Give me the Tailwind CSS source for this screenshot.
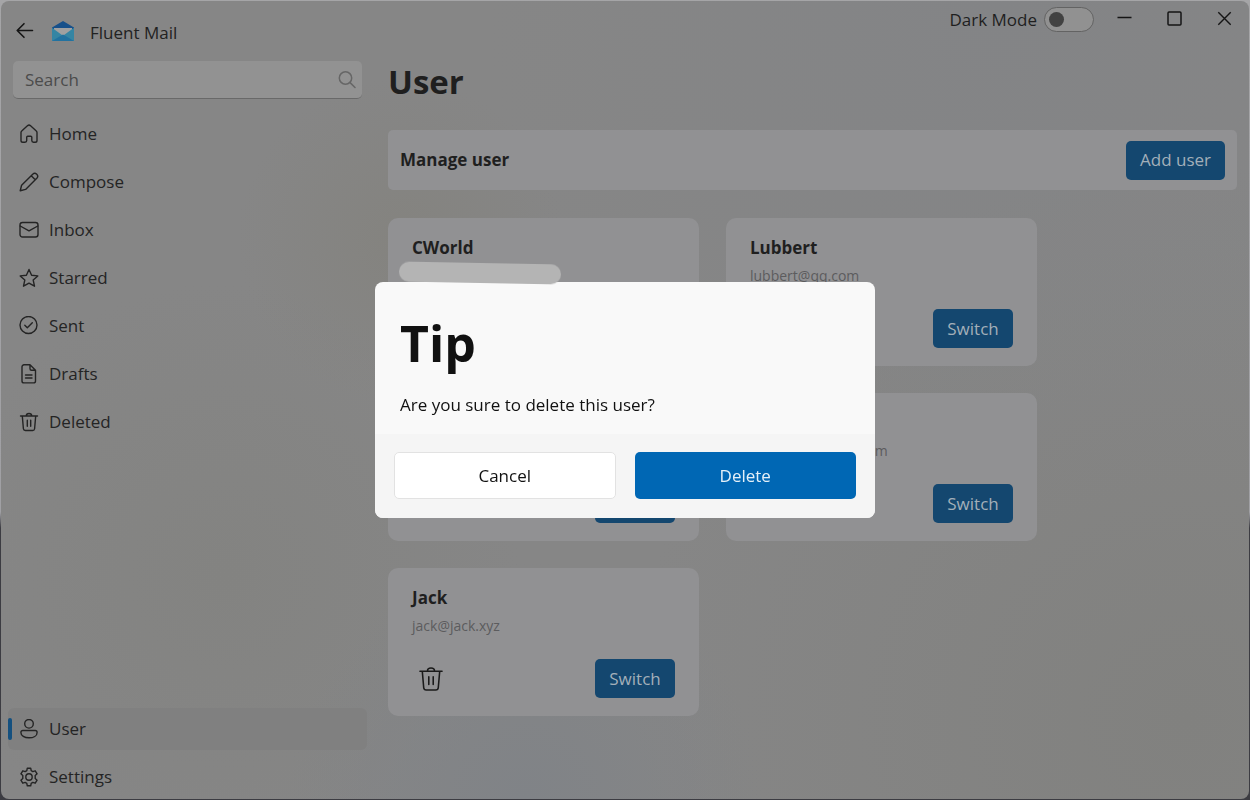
<!DOCTYPE html>
<html lang="en">
<head>
<meta charset="utf-8">
<meta name="viewport" content="width=device-width, initial-scale=1">
<title>Fluent Mail</title>
<script src="https://cdn.jsdelivr.net/npm/@tailwindcss/browser@4"></script>
</head>
<body class="min-h-screen bg-[linear-gradient(to_bottom,#a5a5a7_0%,#a0a0a4_64%,#3c3c42_66%,#3c3c42_100%)] p-px font-['Open_Sans',sans-serif] text-[17px] leading-6 text-[#1f1f1f]">

<svg class="hidden" aria-hidden="true">
  <symbol id="trash" viewBox="0 0 20 20"><path d="M1.5 4h17M3.3 4l1.1 12.7a2 2 0 0 0 2 1.8h7.2a2 2 0 0 0 2-1.8L16.700 4M7.300 3.800a2.700 2.300 0 0 1 5.400 0M8.300 8.200v6M11.700 8.200v6"/></symbol>
</svg>

<div class="flex min-h-[calc(100vh-2px)] overflow-hidden rounded-lg bg-[#868686] bg-[radial-gradient(circle_at_42%_100%,#808387_0%,transparent_22%),radial-gradient(circle_at_32%_30%,#84837f_0%,transparent_16%),radial-gradient(circle_at_80%_0%,#838486_0%,transparent_40%),radial-gradient(circle_at_95%_90%,#81817f_0%,transparent_40%),radial-gradient(circle_at_18%_72%,#838381_0%,transparent_25%)]">

  <aside class="flex w-[374px] shrink-0 flex-col pl-[7px] pr-2">
    <header class="flex h-[60px] items-center pl-2 text-[#222]">
      <button type="button" aria-label="Back" class="mr-[18px]">
        <svg class="size-[18px]" viewBox="0 0 18 18" fill="none" stroke="#151515" stroke-width="1.600" stroke-linecap="round" stroke-linejoin="round"><path d="M16.500 8.500H1.200M8 1.700 1.200 8.500 8 15.300"/></svg>
      </button>
      <svg class="mr-4 size-[22px]" viewBox="0 0 22 22" aria-hidden="true">
        <path d="M0 7.500 11 1 22 7.500v8H0z" fill="#17508a"/>
        <path d="M2 8h18v8H2z" fill="#a0a0a0"/>
        <path d="M0 7.800v13.200h22V7.800l-11 8z" fill="#3585a3"/>
        <path d="M0 21 11 14.500l11 6.500z" fill="#2272a0"/>
      </svg>
      <span class="pt-1">Fluent Mail</span>
    </header>

    <div class="ml-[5px] mr-[5px] flex h-[38px] items-center rounded-[5px] border-b border-[#696969] bg-[#929292] pl-3 pr-1.5">
      <input type="search" aria-label="Search" placeholder="Search" class="min-w-0 flex-1 bg-transparent outline-none placeholder:text-[#4b4b4b]">
      <svg class="size-[18px]" viewBox="0 0 18 18" fill="none" stroke="#666" stroke-width="1.500" stroke-linecap="round" aria-hidden="true"><circle cx="7.500" cy="7" r="6.200"/><path d="m12.100 11.600 4.900 4.900"/></svg>
    </div>

    <nav class="flex flex-1 flex-col gap-1.5 pt-[14px] text-[#242424] [&_a]:flex [&_a]:h-[42px] [&_a]:items-center [&_a]:gap-[10px] [&_a]:rounded-md [&_a]:pl-[11px] [&_svg]:size-5 [&_svg]:fill-none [&_svg]:stroke-[#242424] [&_svg]:[stroke-width:1.4] [&_svg]:[stroke-linejoin:round] [&_svg]:[stroke-linecap:round]">
      <a href="#home"><svg viewBox="0 0 20 20"><path d="M2 8.500a2 2 0 0 1 .7-1.500L8.700 1.600a2 2 0 0 1 2.600 0l6 5.400a2 2 0 0 1 .7 1.500v8a1.800 1.800 0 0 1-1.800 1.800h-1.700a1.700 1.700 0 0 1-1.700-1.700v-3.300a1 1 0 0 0-1-1H8.700a1 1 0 0 0-1 1v3.300A1.700 1.700 0 0 1 6 18.300H3.800A1.800 1.800 0 0 1 2 16.500z"/></svg>Home</a>
      <a href="#compose"><svg viewBox="0 0 20 20"><path d="M1.200 18.700 2.600 13.300 13.700 2.200a2.900 2.900 0 0 1 4.100 4.100L6.600 17.400zM12.200 3.700l4.100 4.100"/></svg>Compose</a>
      <a href="#inbox"><svg viewBox="0 0 20 20"><rect x="1" y="2.500" width="18" height="14.500" rx="2.500"/><path d="m1.200 6 8.800 4.900 8.800-4.900"/></svg>Inbox</a>
      <a href="#starred"><svg viewBox="0 0 20 20"><path d="m10 1.500 2.600 5.700 6.200.7-4.600 4.200 1.300 6.100L10 15.100l-5.500 3.100 1.300-6.100L1.200 7.900l6.200-.7z"/></svg>Starred</a>
      <a href="#sent"><svg viewBox="0 0 20 20"><circle cx="9.500" cy="9" r="8.500"/><path d="m5.800 9.300 2.500 2.500 5-5"/></svg>Sent</a>
      <a href="#drafts"><svg viewBox="0 0 20 20"><path d="M11 .8H5a2 2 0 0 0-2 2v14.100a2 2 0 0 0 2 2h9.500a2 2 0 0 0 2-2V6.300zM11 .8v4a1.500 1.500 0 0 0 1.500 1.500h4M6.500 11H13M6.500 14H13"/></svg>Drafts</a>
      <a href="#deleted"><svg viewBox="0 0 20 20"><use href="#trash"/></svg>Deleted</a>
      <a href="#user" aria-current="page" class="relative mt-auto bg-[#808080] before:absolute before:left-0 before:h-[22px] before:w-1 before:rounded-full before:bg-[#14507f]"><svg viewBox="0 0 20 20"><circle cx="10" cy="4.800" r="4.300"/><path d="M3.800 11.500h12.400a1.900 1.900 0 0 1 1.900 1.900c0 3.400-3.600 5.400-8.100 5.400s-8.100-2-8.100-5.400a1.900 1.900 0 0 1 1.900-1.900z"/></svg>User</a>
      <a href="#settings" class="mb-px"><svg viewBox="0 0 20 20"><circle cx="10" cy="10" r="3.200"/><path d="M8.300 1.200h3.400l.5 2.500 1.600.9 2.400-.8 1.900 3-1.900 1.700v3l1.900 1.700-1.900 3-2.400-.8-1.600.9-.5 2.500H8.300l-.5-2.500-1.600-.9-2.400.8-1.900-3 1.900-1.700v-3L1.900 6.800l1.900-3 2.400.8 1.600-.9z"/></svg>Settings</a>
    </nav>
  </aside>

  <main class="min-w-0 flex-1 pl-[13px] pr-3">
    <div class="flex h-9 items-center justify-end">
      <label for="dark" class="mr-[7px] pt-0.5">Dark Mode</label>
      <input id="dark" type="checkbox" role="switch" class="mr-[23px] flex h-[25px] w-[50px] appearance-none items-center rounded-full border border-[#636363] bg-[#919191] px-1 before:size-[15px] before:rounded-full before:bg-[#424242] checked:justify-end">
      <div class="flex gap-[35px] pb-0.5 pr-[5px]">
        <button type="button" aria-label="Minimize"><svg class="size-[15px]" viewBox="0 0 15 15" fill="none" stroke="#151515" stroke-width="1.300"><path d="M.5 6.500h14"/></svg></button>
        <button type="button" aria-label="Maximize"><svg class="size-[15px]" viewBox="0 0 15 15" fill="none" stroke="#151515" stroke-width="1.500"><rect x="1" y="1" width="13" height="13" rx="1"/></svg></button>
        <button type="button" aria-label="Close"><svg class="size-[15px]" viewBox="0 0 15 15" fill="none" stroke="#151515" stroke-width="1.400"><path d="m1.300 1.300 12.400 12.400M13.700 1.300 1.300 13.700"/></svg></button>
      </div>
    </div>

    <h1 class="mt-[22px] text-[33px] font-bold leading-[45px]">User</h1>

    <section class="mt-[26px] flex h-[60px] items-center justify-between rounded-[5px] bg-[#919193] px-3">
      <h2 class="font-bold">Manage user</h2>
      <button type="button" class="h-[39px] rounded-[5px] bg-[#14476f] px-[14px] text-[#a3afb9]">Add user</button>
    </section>

    <section aria-label="Users" class="mt-7 grid grid-cols-[repeat(auto-fill,311px)] gap-[27px]">
      <article class="relative flex h-[148px] flex-col rounded-[10px] bg-[#919193] px-6 pb-[18px] pt-[18px]">
        <h3 class="font-bold">CWorld</h3>
        <span class="absolute left-[11px] top-[45px] z-10 h-5 w-[162px] rotate-1 rounded-full bg-[#b4b4b4]"></span>
        <div class="mt-auto flex items-center justify-between">
          <button type="button" aria-label="Delete CWorld" class="ml-1.5"><svg class="size-[26px] fill-none stroke-[#1a1a1a]" viewBox="0 0 20 20"><use href="#trash"/></svg></button>
          <button type="button" class="h-[39px] w-20 rounded-[5px] bg-[#14476f] text-[#a3afb9]">Switch</button>
        </div>
      </article>
      <article class="flex h-[148px] flex-col rounded-[10px] bg-[#919193] px-6 pb-[18px] pt-[18px]">
        <h3 class="font-bold">Lubbert</h3>
        <p class="mt-1 text-[14px] leading-6 text-[#5c5c5e]">lubbert@qq.com</p>
        <div class="mt-auto flex items-center justify-between">
          <button type="button" aria-label="Delete Lubbert" class="ml-1.5"><svg class="size-[26px] fill-none stroke-[#1a1a1a]" viewBox="0 0 20 20"><use href="#trash"/></svg></button>
          <button type="button" class="h-[39px] w-20 rounded-[5px] bg-[#14476f] text-[#a3afb9]">Switch</button>
        </div>
      </article>
      <article class="flex h-[148px] flex-col justify-end rounded-[10px] bg-[#919193] px-6 pb-[18px] pt-[18px]">
        <div class="flex items-center justify-end">
          <button type="button" class="h-[39px] w-20 rounded-[5px] bg-[#14476f] text-[#a3afb9]">Switch</button>
        </div>
      </article>
      <article class="flex h-[148px] flex-col rounded-[10px] bg-[#919193] px-6 pb-[18px] pt-[18px]">
        <h3 class="font-bold">Sophia</h3>
        <p class="mt-1 text-[14px] leading-6 text-[#5c5c5e]">sophia@outlook.com</p>
        <div class="mt-auto flex items-center justify-end">
          <button type="button" class="h-[39px] w-20 rounded-[5px] bg-[#14476f] text-[#a3afb9]">Switch</button>
        </div>
      </article>
      <article class="flex h-[148px] flex-col rounded-[10px] bg-[#919193] px-6 pb-[18px] pt-[18px]">
        <h3 class="font-bold">Jack</h3>
        <p class="mt-1 text-[14px] leading-6 text-[#5c5c5e]">jack@jack.xyz</p>
        <div class="mt-auto flex items-center justify-between">
          <button type="button" aria-label="Delete Jack" class="ml-1.5"><svg class="size-[26px] fill-none stroke-[#1a1a1a] [stroke-linecap:round] [stroke-width:1.2]" viewBox="0 0 20 20"><use href="#trash"/></svg></button>
          <button type="button" class="h-[39px] w-20 rounded-[5px] bg-[#14476f] text-[#a3afb9]">Switch</button>
        </div>
      </article>
    </section>
  </main>
</div>

<div class="fixed inset-0 flex items-center justify-center">
  <section role="dialog" aria-modal="true" aria-labelledby="tip" class="w-[500px] overflow-hidden rounded-lg bg-[#f9f9f9] text-[#111]">
    <div class="px-[25px] pb-[17px] pt-[30px]">
      <h2 id="tip" class="text-[50px] font-bold leading-[62px]">Tip</h2>
      <p class="mt-[19px]">Are you sure to delete this user?</p>
    </div>
    <div class="grid grid-cols-2 gap-[19px] bg-[#f5f5f5] px-[19px] pb-[19px] pt-[18px]">
      <button type="button" class="h-[47px] rounded-[5px] border border-[#e2e2e2] bg-white">Cancel</button>
      <button type="button" class="h-[47px] rounded-[5px] bg-[#0067b4] text-[#e4f0f8]">Delete</button>
    </div>
  </section>
</div>
</body>
</html>
